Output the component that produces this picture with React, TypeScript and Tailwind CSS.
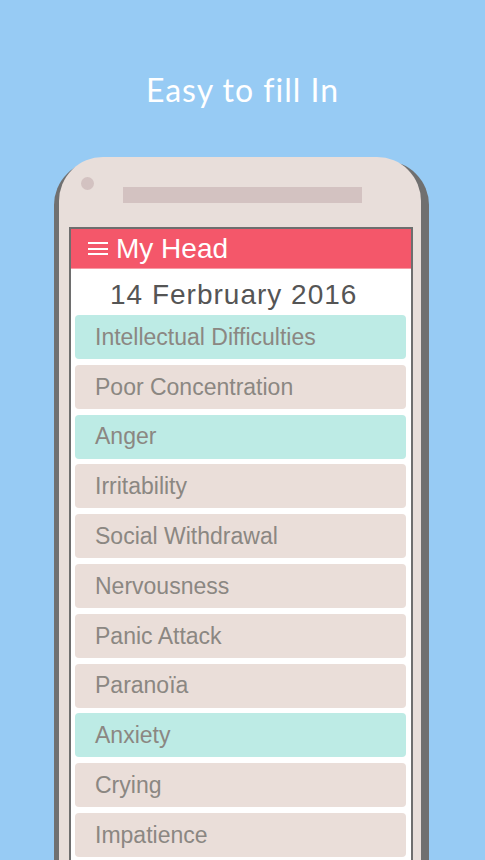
import React from "react";

const items = [
  { label: "Intellectual Difficulties", on: true },
  { label: "Poor Concentration", on: false },
  { label: "Anger", on: true },
  { label: "Irritability", on: false },
  { label: "Social Withdrawal", on: false },
  { label: "Nervousness", on: false },
  { label: "Panic Attack", on: false },
  { label: "Paranoïa", on: false },
  { label: "Anxiety", on: true },
  { label: "Crying", on: false },
  { label: "Impatience", on: false },
];

const App = () => {
  return (
    <div className="w-[485px] h-[860px] overflow-hidden bg-[#97cbf4] font-['Liberation_Sans',Arial,sans-serif]">
      {/* Title */}
      <div className="h-[157px] pt-[70px] text-center">
        <h1 className="text-[32px] leading-[40px] tracking-[1px] text-white font-['Lato',sans-serif]">
          Easy to fill In
        </h1>
      </div>

      {/* Phone */}
      <div className="ml-[59px] w-[362px] h-[760px] bg-[#e8deda] rounded-t-[44px] shadow-[-5px_4px_0_0_#707070,8px_4px_0_0_#707070]">
        <div className="relative h-[70px]">
          <div className="absolute left-[22px] top-[20px] w-[13px] h-[13px] rounded-full bg-[#d3c2c1]" />
          <div className="absolute left-[64px] top-[30px] w-[239px] h-[16px] bg-[#d3c2c1]" />
        </div>

        <div className="ml-[10px] w-[344px] h-[700px] border-2 border-b-0 border-[#6e6e6e] bg-white">
          <header className="h-[40px] bg-[#f4576a] border-b border-[#f89aa4] flex items-center pl-[17px] gap-[8px]">
            <div className="flex flex-col gap-[3.5px] w-[20px]">
              <span className="h-[2px] bg-white block" />
              <span className="h-[2px] bg-white block" />
              <span className="h-[2px] bg-white block" />
            </div>
            <span className="text-[28px] leading-none text-white">My Head</span>
          </header>

          <div className="h-[46px] flex items-center pl-[39px] pt-[5px] text-[28px] tracking-[1px] leading-none text-[#555555]">
            14 Ferbruary 2016
          </div>

          <div className="flex flex-col gap-[5.8px] pl-[4px] pr-[5px]">
            {items.map((it) => (
              <div
                key={it.label}
                className={`h-[44px] rounded-[4px] flex items-center pl-[20px] text-[23px] text-[#8b8782] ${
                  it.on ? "bg-[#bdebe5]" : "bg-[#eaded9]"
                }`}
              >
                {it.label}
              </div>
            ))}
          </div>
        </div>
      </div>
    </div>
  );
};

export default App;
